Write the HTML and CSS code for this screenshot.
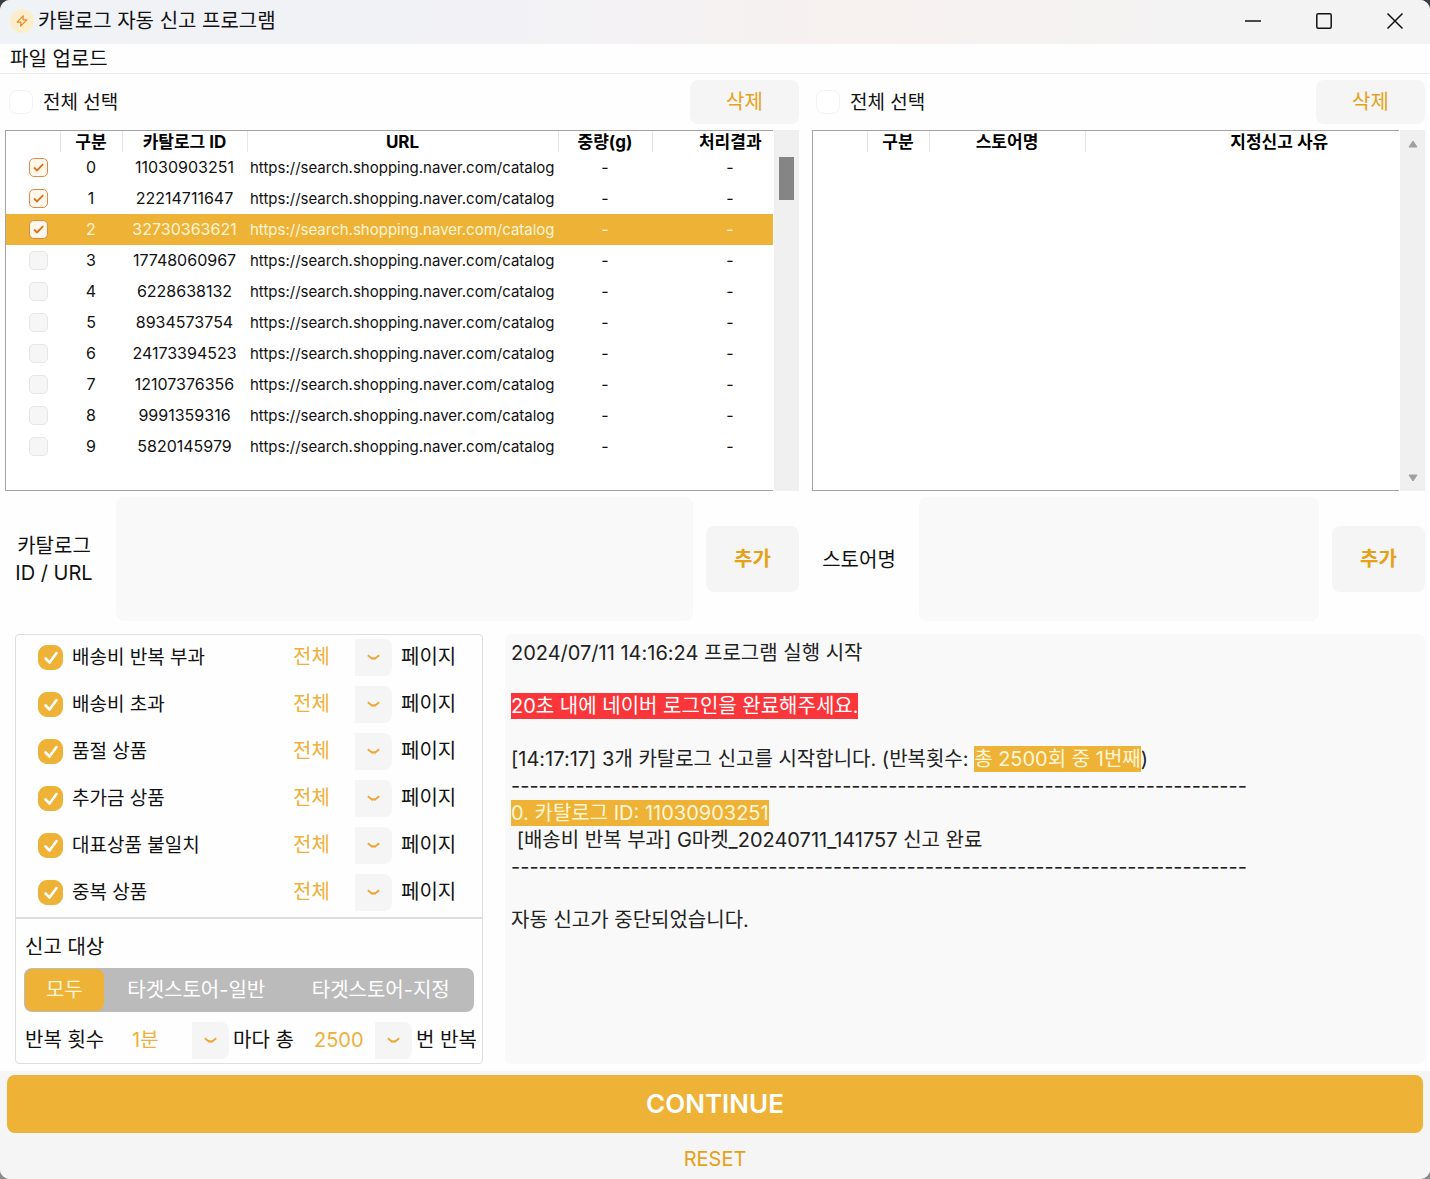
FILE: index.html
```html
<!DOCTYPE html>
<html lang="ko">
<head>
<meta charset="utf-8">
<meta name="viewport" content="width=device-width, initial-scale=1">
<title>카탈로그 자동 신고 프로그램</title>
<link rel="stylesheet" href="styles.css">
</head>
<body>
<div class="window">
  <header class="titlebar">
    <svg class="app-icon" viewBox="0 0 24 24" aria-hidden="true"><circle cx="12" cy="12" r="12" fill="#fdeecb"/><path d="M13.3 6.8 L7.2 13.2 H11 L10.6 17.2 L16.8 10.8 H13 Z" fill="none" stroke="#ea8a2e" stroke-width="1.2" stroke-linejoin="round"/></svg>
    <h1 class="title">카탈로그 자동 신고 프로그램</h1>
    <div class="window-controls">
      <button type="button" class="window-button" aria-label="최소화"><svg viewBox="0 0 16 16"><path d="M0 8H16"/></svg></button>
      <button type="button" class="window-button" aria-label="최대화"><svg viewBox="0 0 16 16"><rect x="0.8" y="0.8" width="14.4" height="14.4" rx="1.5"/></svg></button>
      <button type="button" class="window-button" aria-label="닫기"><svg viewBox="0 0 16 16"><path d="M0.5 0.5L15.5 15.5M15.5 0.5L0.5 15.5"/></svg></button>
    </div>
  </header>
  <nav class="menubar"><button type="button" class="menu-item">파일 업로드</button></nav>

  <main class="content">
    <div class="lists">
      <section class="list">
        <div class="list-head">
          <label class="select-all"><input type="checkbox" class="check-all">전체 선택</label>
          <button type="button" class="soft-button delete">삭제</button>
        </div>
        <div class="table-box">
          <div class="table-view">
            <table class="table catalog-table">
              <colgroup><col class="c-check"><col class="c-no"><col class="c-id"><col><col class="c-weight"><col class="c-result"></colgroup>
              <thead><tr><th></th><th>구분</th><th>카탈로그 ID</th><th>URL</th><th>중량(g)</th><th>처리결과</th></tr></thead>
              <tbody>
                <tr><td><input type="checkbox" class="row-check" aria-label="0" checked></td><td>0</td><td>11030903251</td><td><div class="url">https://search.shopping.naver.com/catalog</div></td><td>-</td><td>-</td></tr>
                <tr><td><input type="checkbox" class="row-check" aria-label="1" checked></td><td>1</td><td>22214711647</td><td><div class="url">https://search.shopping.naver.com/catalog</div></td><td>-</td><td>-</td></tr>
                <tr class="selected"><td><input type="checkbox" class="row-check" aria-label="2" checked></td><td>2</td><td>32730363621</td><td><div class="url">https://search.shopping.naver.com/catalog</div></td><td>-</td><td>-</td></tr>
                <tr><td><input type="checkbox" class="row-check" aria-label="3"></td><td>3</td><td>17748060967</td><td><div class="url">https://search.shopping.naver.com/catalog</div></td><td>-</td><td>-</td></tr>
                <tr><td><input type="checkbox" class="row-check" aria-label="4"></td><td>4</td><td>6228638132</td><td><div class="url">https://search.shopping.naver.com/catalog</div></td><td>-</td><td>-</td></tr>
                <tr><td><input type="checkbox" class="row-check" aria-label="5"></td><td>5</td><td>8934573754</td><td><div class="url">https://search.shopping.naver.com/catalog</div></td><td>-</td><td>-</td></tr>
                <tr><td><input type="checkbox" class="row-check" aria-label="6"></td><td>6</td><td>24173394523</td><td><div class="url">https://search.shopping.naver.com/catalog</div></td><td>-</td><td>-</td></tr>
                <tr><td><input type="checkbox" class="row-check" aria-label="7"></td><td>7</td><td>12107376356</td><td><div class="url">https://search.shopping.naver.com/catalog</div></td><td>-</td><td>-</td></tr>
                <tr><td><input type="checkbox" class="row-check" aria-label="8"></td><td>8</td><td>9991359316</td><td><div class="url">https://search.shopping.naver.com/catalog</div></td><td>-</td><td>-</td></tr>
                <tr><td><input type="checkbox" class="row-check" aria-label="9"></td><td>9</td><td>5820145979</td><td><div class="url">https://search.shopping.naver.com/catalog</div></td><td>-</td><td>-</td></tr>
              </tbody>
            </table>
          </div>
          <div class="scrollbar scrollbar-active"><div class="thumb"></div></div>
        </div>
        <div class="add-row">
          <label class="add-label catalog-label" for="catalog-input">카탈로그<br>ID / URL</label>
          <textarea id="catalog-input" class="add-input"></textarea>
          <button type="button" class="soft-button add">추가</button>
        </div>
      </section>

      <section class="list">
        <div class="list-head">
          <label class="select-all"><input type="checkbox" class="check-all">전체 선택</label>
          <button type="button" class="soft-button delete">삭제</button>
        </div>
        <div class="table-box">
          <div class="table-view">
            <table class="table store-table">
              <colgroup><col class="c-check"><col class="c-no"><col class="c-store"><col></colgroup>
              <thead><tr><th></th><th>구분</th><th>스토어명</th><th>지정신고 사유</th></tr></thead>
              <tbody></tbody>
            </table>
          </div>
          <div class="scrollbar">
            <svg class="arrow" viewBox="0 0 10 8"><path d="M5 1L9 7H1Z"/></svg>
            <svg class="arrow" viewBox="0 0 10 8"><path d="M5 7L1 1H9Z"/></svg>
          </div>
        </div>
        <div class="add-row">
          <label class="add-label store-label" for="store-input">스토어명</label>
          <textarea id="store-input" class="add-input"></textarea>
          <button type="button" class="soft-button add">추가</button>
        </div>
      </section>
    </div>

    <div class="lower">
      <section class="options">
        <ul class="reasons">
          <li class="reason"><label class="reason-label"><input type="checkbox" class="tick" checked>배송비 반복 부과</label><span class="combo"><select class="combo-select" aria-label="배송비 반복 부과 페이지"><option>전체</option></select><svg class="chevron" viewBox="0 0 13 7"><path d="M0.8 1.2L5.2 4.8Q6.5 3.8 7.8 4.8L12.2 1.2"/></svg></span><span class="unit">페이지</span></li>
          <li class="reason"><label class="reason-label"><input type="checkbox" class="tick" checked>배송비 초과</label><span class="combo"><select class="combo-select" aria-label="배송비 초과 페이지"><option>전체</option></select><svg class="chevron" viewBox="0 0 13 7"><path d="M0.8 1.2L5.2 4.8Q6.5 3.8 7.8 4.8L12.2 1.2"/></svg></span><span class="unit">페이지</span></li>
          <li class="reason"><label class="reason-label"><input type="checkbox" class="tick" checked>품절 상품</label><span class="combo"><select class="combo-select" aria-label="품절 상품 페이지"><option>전체</option></select><svg class="chevron" viewBox="0 0 13 7"><path d="M0.8 1.2L5.2 4.8Q6.5 3.8 7.8 4.8L12.2 1.2"/></svg></span><span class="unit">페이지</span></li>
          <li class="reason"><label class="reason-label"><input type="checkbox" class="tick" checked>추가금 상품</label><span class="combo"><select class="combo-select" aria-label="추가금 상품 페이지"><option>전체</option></select><svg class="chevron" viewBox="0 0 13 7"><path d="M0.8 1.2L5.2 4.8Q6.5 3.8 7.8 4.8L12.2 1.2"/></svg></span><span class="unit">페이지</span></li>
          <li class="reason"><label class="reason-label"><input type="checkbox" class="tick" checked>대표상품 불일치</label><span class="combo"><select class="combo-select" aria-label="대표상품 불일치 페이지"><option>전체</option></select><svg class="chevron" viewBox="0 0 13 7"><path d="M0.8 1.2L5.2 4.8Q6.5 3.8 7.8 4.8L12.2 1.2"/></svg></span><span class="unit">페이지</span></li>
          <li class="reason"><label class="reason-label"><input type="checkbox" class="tick" checked>중복 상품</label><span class="combo"><select class="combo-select" aria-label="중복 상품 페이지"><option>전체</option></select><svg class="chevron" viewBox="0 0 13 7"><path d="M0.8 1.2L5.2 4.8Q6.5 3.8 7.8 4.8L12.2 1.2"/></svg></span><span class="unit">페이지</span></li>
        </ul>
        <div class="target">
          <h2 class="target-title">신고 대상</h2>
          <div class="segments">
            <button type="button" class="segment active">모두</button>
            <button type="button" class="segment">타겟스토어-일반</button>
            <button type="button" class="segment">타겟스토어-지정</button>
          </div>
          <div class="repeat">
            <label class="interval-label" for="interval">반복 횟수</label>
            <span class="combo combo-interval"><select id="interval" class="combo-select"><option>1분</option></select><svg class="chevron" viewBox="0 0 13 7"><path d="M0.8 1.2L5.2 4.8Q6.5 3.8 7.8 4.8L12.2 1.2"/></svg></span>
            <label class="count-label" for="count">마다 총</label>
            <span class="combo combo-count"><select id="count" class="combo-select"><option>2500</option></select><svg class="chevron" viewBox="0 0 13 7"><path d="M0.8 1.2L5.2 4.8Q6.5 3.8 7.8 4.8L12.2 1.2"/></svg></span>
            <span>번 반복</span>
          </div>
        </div>
      </section>

      <section class="log" aria-label="로그">
        <p>2024/07/11 14:16:24 프로그램 실행 시작</p>
        <p><mark class="alert">20초 내에 네이버 로그인을 완료해주세요.</mark></p>
        <p>[14:17:17] 3개 카탈로그 신고를 시작합니다. (반복횟수: <mark>총 2500회 중 1번째</mark>)<br>--------------------------------------------------------------------------------<br><mark>0. 카탈로그 ID: 11030903251</mark><br>&nbsp;[배송비 반복 부과] G마켓_20240711_141757 신고 완료<br>--------------------------------------------------------------------------------</p>
        <p>자동 신고가 중단되었습니다.</p>
      </section>
    </div>
  </main>

  <footer class="actions">
    <button type="button" class="continue">CONTINUE</button>
    <button type="button" class="reset">RESET</button>
  </footer>
</div>
</body>
</html>
```

FILE: styles.css
```css
* { box-sizing: border-box; }

html { background: linear-gradient(#3b3d40 50%, #8c8c8c 50%); }

body {
  margin: 0;
  font: 20px/27px Inter, "Noto Sans CJK KR", sans-serif;
  color: #111;
}

button, select, textarea { font: inherit; color: inherit; border: 0; padding: 0; background: none; }
h1, h2, p, ul { margin: 0; padding: 0; font-size: inherit; font-weight: 400; list-style: none; }

.window {
  display: flex;
  flex-direction: column;
  min-height: 100vh;
  background: #fefefe;
  border-radius: 10px;
  overflow: hidden;
}

/* Title bar and menu */
.titlebar {
  display: flex;
  align-items: center;
  height: 44px;
  padding: 0 0 2px 10px;
  background: linear-gradient(90deg, #eff2f6, #f2f2f6 35%, #f7f1ef 60%, #f3f3f3 85%);
}
.app-icon { width: 24px; height: 24px; margin-right: 4px; }
.title { flex: 1; }
.window-controls { display: flex; }
.window-button { display: grid; place-items: center; width: 71px; height: 42px; }
.window-button svg { width: 16px; height: 16px; fill: none; stroke: #111; stroke-width: 1.5; overflow: visible; }
.menubar { height: 30px; padding: 2px 10px 0; border-bottom: 1px solid #ececec; }

.content { flex: 1; display: flex; flex-direction: column; gap: 13px; padding: 6px 5px 7px; }

/* Lists */
.lists { display: grid; grid-template-columns: 794fr 613fr; gap: 13px; }
.list { min-width: 0; }
.list-head { display: flex; justify-content: space-between; align-items: center; height: 44px; margin-bottom: 6px; }
.select-all { display: flex; align-items: center; gap: 10px; padding-left: 4px; font-size: 19px; }
.check-all {
  appearance: none;
  width: 24px;
  height: 24px;
  margin: 0;
  border: 1px solid #f2f2f2;
  border-radius: 8px;
  background: #fff;
}
.soft-button { background: #f5f5f5; border-radius: 8px; color: #e6a117; }
.delete { width: 109px; height: 44px; }
.add { width: 93px; height: 66px; font-weight: 700; flex: none; }

.table-box { display: flex; height: 361px; }
.table-view { flex: 1; min-width: 0; overflow: hidden; border: 1px solid #a3a3a3; border-right: 0; background: #fff; }
.table { border-collapse: collapse; table-layout: fixed; font-size: 16px; color: #111; }
.catalog-table { width: calc(100% + 35px); }
.store-table { width: calc(100% + 74px); }
.c-check { width: 54px; }
.c-no { width: 62px; }
.c-id { width: 125px; }
.c-weight { width: 94px; }
.c-result { width: 156px; }
.c-store { width: 156px; }
.table th { height: 21px; padding: 1px 0 0; font-size: 17px; line-height: 20px; color: #000; border-right: 1px solid #e6e6e6; white-space: nowrap; }
.table th:last-child { border-right: 0; }
.table td { height: 31px; padding: 0; line-height: 31px; text-align: center; white-space: nowrap; }
.table td:first-child { padding-left: 10px; }
.url { height: 31px; margin: 0 3px; overflow: hidden; font-size: 15px; text-align: left; }
.selected { background: #eeb236; color: #fff6d8; }
.row-check {
  appearance: none;
  display: block;
  width: 19px;
  height: 19px;
  margin: 0 auto;
  border: 1px solid #e6e6e6;
  border-radius: 5px;
  background: #f6f6f6;
}
.row-check:checked {
  border-color: #e08a4a;
  background: #fff8ea url("data:image/svg+xml,%3Csvg xmlns='http://www.w3.org/2000/svg' viewBox='0 0 17 17'%3E%3Cpath d='M4 8.5L7 11.5L13.2 5.2' fill='none' stroke='%23d9701c' stroke-width='1.8'/%3E%3C/svg%3E") center / 100%;
}

.scrollbar { display: flex; flex-direction: column; justify-content: space-between; align-items: center; width: 26px; padding: 10px 0 9px; border-left: 1px solid #fff; background: #f0f0f0; }
.scrollbar-active { padding-top: 27px; }
.thumb { width: 15px; height: 43px; background: #858585; }
.arrow { width: 10px; height: 8px; fill: #a0a0a0; stroke: #a0a0a0; stroke-linejoin: round; }

.add-row { display: flex; align-items: center; margin-top: 6px; }
.add-label { flex: none; padding-top: 2px; text-align: center; }
.catalog-label { width: 98px; margin-right: 13px; }
.store-label { width: 94px; margin-right: 13px; }
.add-input { flex: 1; min-width: 0; height: 124px; margin-right: 13px; padding: 8px; border-radius: 8px; background: #f9f9f9; resize: none; }

/* Options */
.lower { flex: 1; display: grid; grid-template-columns: 468px 1fr; gap: 22px; padding-left: 10px; }
.options { display: flex; flex-direction: column; border: 1px solid #dedede; border-radius: 4px; }
.reasons { border-bottom: 2px solid #dedede; }
.reason { display: flex; align-items: center; height: 47px; padding: 0 0 2px 22px; }
.reason-label { display: flex; align-items: center; gap: 9px; width: 241px; font-size: 19px; }
.tick {
  appearance: none;
  width: 25px;
  height: 25px;
  margin: 0;
  border: 1px solid #eeb236;
  border-radius: 9px;
}
.tick:checked {
  background: #eeb236 url("data:image/svg+xml,%3Csvg xmlns='http://www.w3.org/2000/svg' viewBox='0 0 23 23'%3E%3Cpath d='M6.5 12.5L10.5 16.5L17.5 7' fill='none' stroke='white' stroke-width='2.6' stroke-linecap='round' stroke-linejoin='round'/%3E%3C/svg%3E") center / 100%;
}
.combo { position: relative; width: 113px; height: 37px; }
.combo-select {
  appearance: none;
  width: 100%;
  height: 37px;
  padding-left: 14px;
  border-radius: 0 8px 8px 0;
  background: linear-gradient(#f5f5f5, #f5f5f5) right / 37px 100% no-repeat;
  color: #eeb03a;
}
.chevron { position: absolute; right: 12px; top: 15px; width: 13px; height: 7px; fill: none; stroke: #eda83c; stroke-width: 2; pointer-events: none; }
.unit { padding-left: 9px; }

.target { padding: 15px 4px 4px 8px; }
.target-title { margin-bottom: 7px; padding-left: 1px; }
.segments { display: flex; height: 44px; margin-right: 4px; padding: 1px; border-radius: 8px; background: #bbb; color: #fff; }
.segment { flex: 1; white-space: nowrap; }
.segment.active { flex: 0 0 79px; border-radius: 8px; background: #eeb236; color: #fff6d8; }
.repeat { display: flex; align-items: center; height: 37px; margin-top: 10px; white-space: nowrap; }
.interval-label { width: 94px; padding-left: 1px; }
.count-label { width: 71px; }
.combo-interval { width: 111px; margin-right: 4px; }
.combo-count { width: 108px; margin-right: 4px; }
.combo-count .combo-select { padding-left: 10px; }

/* Log */
.log { display: flex; flex-direction: column; gap: 26px; min-width: 0; padding: 6px; border-radius: 6px; background: #f9f9f9; color: #222; }
.log mark { padding: 1px 0; background: #eeb236; color: #fff6d8; }
.log .alert { background: #fb363b; color: #fff; }

/* Footer */
.actions { display: flex; flex-direction: column; align-items: center; gap: 13px; padding: 4px 7px 6px; background: #f5f5f5; }
.continue { width: 100%; height: 58px; padding-bottom: 2px; border-radius: 8px; background: #eeb236; color: #fff; font-size: 26px; font-weight: 600; }
.reset { color: #e6a117; }
```
